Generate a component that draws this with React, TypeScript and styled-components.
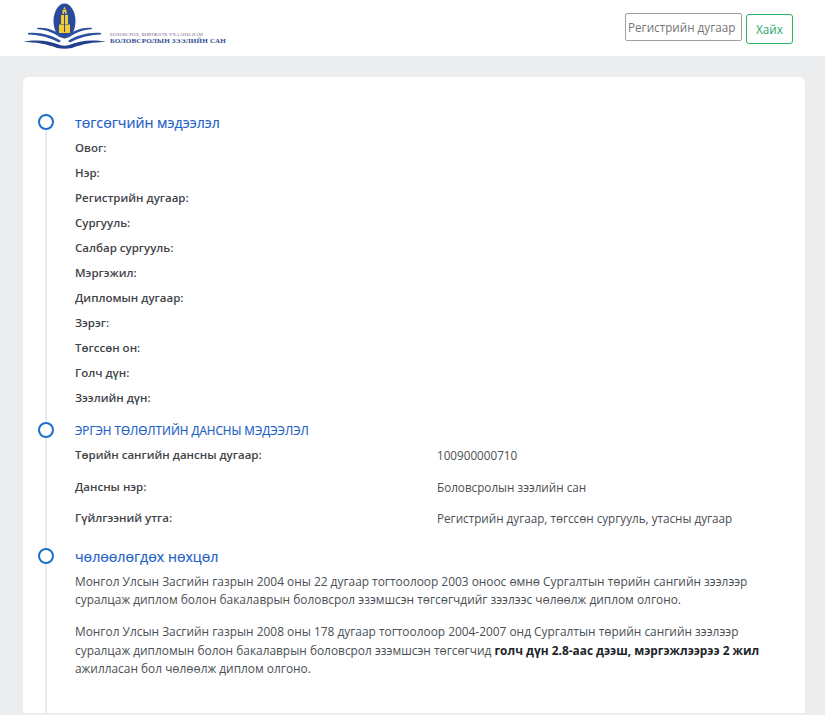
import React from 'react'
import styled, { createGlobalStyle } from 'styled-components'

const GlobalStyle = createGlobalStyle`
  html, body {
    margin: 0;
    padding: 0;
    background: #ecedef;
    font-family: "Open Sans", "Noto Sans", sans-serif;
    color: #343a40;
  }
  * { box-sizing: border-box; }
`

const Header = styled.header`
  height: 56px;
  background: #fff;
  display: flex;
  align-items: flex-start;
  justify-content: space-between;
  padding: 0 32px 0 23px;
`

const Brand = styled.div`
  display: flex;
  align-items: flex-start;
  gap: 3px;
`

const BrandText = styled.div`
  padding-top: 32px;
  font-family: "Liberation Serif", serif;
  white-space: nowrap;
`

const Ministry = styled.div`
  font-size: 4.6px;
  line-height: 5px;
  color: #77668c;
  letter-spacing: 0.2px;
`

const FundName = styled.div`
  font-size: 7.1px;
  line-height: 9px;
  font-weight: 700;
  color: #2f4a8f;
  letter-spacing: 0.2px;
`

const SearchForm = styled.form`
  display: flex;
  align-items: flex-start;
  gap: 4px;
  padding-top: 13px;
`

const SearchInput = styled.input`
  width: 117px;
  height: 28px;
  padding: 0 2px;
  border: 1px solid #a0a0a0;
  border-radius: 2px;
  font-family: inherit;
  font-size: 11.7px;
  outline: none;
  &::placeholder { color: #757575; opacity: 1; }
`

const SearchButton = styled.button`
  width: 47px;
  height: 30px;
  margin-top: 1px;
  border: 1px solid #28b463;
  border-radius: 3px;
  background: #fff;
  color: #28a868;
  font-family: inherit;
  font-size: 11.7px;
`

const Main = styled.main`
  padding: 21px 20px 0 23px;
`

const Card = styled.div`
  background: #fff;
  border-radius: 6px 6px 0 0;
  height: 636px;
  padding: 36px 0 0 15px;
  overflow: hidden;
`

const Timeline = styled.div`
  display: flex;
  flex-direction: column;
`

const Section = styled.section<{ $gap: number }>`
  position: relative;
  padding: 0 25px 0 37px;
  margin-bottom: ${(p) => p.$gap}px;

  &::before {
    content: '';
    position: absolute;
    left: 7px;
    top: 0;
    bottom: ${(p) => -p.$gap}px;
    width: 2px;
    background: #e9ecef;
  }
`

const Marker = styled.span`
  position: absolute;
  left: 0;
  top: 1px;
  width: 16px;
  height: 16px;
  border: 2px solid #1f6fc9;
  border-radius: 50%;
  background: #fff;
`

const Title = styled.h3<{ $size: number }>`
  margin: 0;
  font-size: ${(p) => p.$size}px;
  line-height: 19px;
  font-weight: 400;
  color: #1f62c6;
  -webkit-text-stroke: 0.2px #1f62c6;
`

const InfoList = styled.div<{ $top: number }>`
  margin-top: ${(p) => p.$top}px;
`

const InfoLine = styled.div`
  height: 25px;
  font-size: 11.5px;
  line-height: 25px;
  font-weight: 600;
  color: #3f4449;
`

const AccountRow = styled.div`
  display: grid;
  grid-template-columns: 362px 1fr;
  height: 31.5px;
  font-size: 11.7px;
  line-height: 25px;
`

const AccountLabel = styled.div`
  font-size: 11.5px;
  line-height: 24px;
  font-weight: 600;
  color: #3f4449;
`

const AccountValue = styled.div`
  color: #4a4f55;
`

const Paragraph = styled.p`
  margin: 0 0 13px;
  font-size: 11.9px;
  line-height: 18.7px;
  color: #4a4f55;

  b { color: #212529; }
`

function LogoMark() {
  return (
    <svg width="84" height="47" viewBox="0 0 84 47" style={{ marginTop: 2 }}>
      <ellipse cx="41.5" cy="19" rx="11" ry="17.5" fill="#2a4b9b" />
      {/* соёмбо */}
      <path d="M41.5 4.500l1.300 3h-2.600z" fill="#f5cc2f" />
      <path d="M39.500 8h4v4h-4z" fill="#f5cc2f" />
      <path d="M38 13h7v9h-7z" fill="#f5cc2f" />
      <path d="M36 22.500h11v8.500h-11z" fill="#f5cc2f" />
      <path d="M41 10h1v20h-1z" fill="#2a4b9b" />
      {/* ном */}
      <path d="M14 26c9-1 18 2 25 8l-2 1.500c-6-5-14-7.500-23-8.500z" fill="#2d4f9f" />
      <path d="M69 26c-9-1-18 2-25 8l2 1.500c6-5 14-7.500 23-8.500z" fill="#2d4f9f" />
      <path d="M5 31c12-1 24 2 33 8l-2 1.500c-9-5-19-7.500-31-8z" fill="#2d4f9f" />
      <path d="M78 31c-12-1-24 2-33 8l2 1.500c9-5 19-7.500 31-8z" fill="#2d4f9f" />
      <path d="M0 40c14-3 27-1 37 3 3 1 6 1 9 0 10-4 23-6 37-3-12 0-24 2-34 6-5 1-10 1-15 0-10-4-22-6-34-6z" fill="#24408c" />
    </svg>
  )
}

export default function App() {
  return (
    <>
      <GlobalStyle />
      <Header>
        <Brand>
          <LogoMark />
          <BrandText>
            <Ministry>БОЛОВСРОЛ, ШИНЖЛЭХ УХААНЫ ЯАМ</Ministry>
            <FundName>БОЛОВСРОЛЫН ЗЭЭЛИЙН САН</FundName>
          </BrandText>
        </Brand>
        <SearchForm>
          <SearchInput placeholder="Регистрийн дугаар" />
          <SearchButton type="button">Хайх</SearchButton>
        </SearchForm>
      </Header>
      <Main>
        <Card>
          <Timeline>
            <Section $gap={11}>
              <Marker />
              <Title $size={14.2}>төгсөгчийн мэдээлэл</Title>
              <InfoList $top={3}>
                <InfoLine>Овог:</InfoLine>
                <InfoLine>Нэр:</InfoLine>
                <InfoLine>Регистрийн дугаар:</InfoLine>
                <InfoLine>Сургууль:</InfoLine>
                <InfoLine>Салбар сургууль:</InfoLine>
                <InfoLine>Мэргэжил:</InfoLine>
                <InfoLine>Дипломын дугаар:</InfoLine>
                <InfoLine>Зэрэг:</InfoLine>
                <InfoLine>Төгссөн он:</InfoLine>
                <InfoLine>Голч дүн:</InfoLine>
                <InfoLine>Зээлийн дүн:</InfoLine>
              </InfoList>
            </Section>
            <Section $gap={9}>
              <Marker />
              <Title $size={11.7}>ЭРГЭН ТӨЛӨЛТИЙН ДАНСНЫ МЭДЭЭЛЭЛ</Title>
              <InfoList $top={3}>
                <AccountRow>
                  <AccountLabel>Төрийн сангийн дансны дугаар:</AccountLabel>
                  <AccountValue>100900000710</AccountValue>
                </AccountRow>
                <AccountRow>
                  <AccountLabel>Дансны нэр:</AccountLabel>
                  <AccountValue>Боловсролын зээлийн сан</AccountValue>
                </AccountRow>
                <AccountRow>
                  <AccountLabel>Гүйлгээний утга:</AccountLabel>
                  <AccountValue>Регистрийн дугаар, төгссөн сургууль, утасны дугаар</AccountValue>
                </AccountRow>
              </InfoList>
            </Section>
            <Section $gap={60}>
              <Marker />
              <Title $size={14.2}>чөлөөлөгдөх нөхцөл</Title>
              <InfoList $top={6}>
                <Paragraph>
                  Монгол Улсын Засгийн газрын 2004 оны 22 дугаар тогтоолоор 2003 оноос өмнө Сургалтын төрийн сангийн зээлээр суралцаж диплом болон бакалаврын боловсрол эзэмшсэн төгсөгчдийг зээлээс чөлөөлж диплом олгоно.
                </Paragraph>
                <Paragraph>
                  Монгол Улсын Засгийн газрын 2008 оны 178 дугаар тогтоолоор 2004-2007 онд Сургалтын төрийн сангийн зээлээр суралцаж дипломын болон бакалаврын боловсрол эзэмшсэн төгсөгчид <b>голч дүн 2.8-аас дээш, мэргэжлээрээ 2 жил</b> ажилласан бол чөлөөлж диплом олгоно.
                </Paragraph>
              </InfoList>
            </Section>
          </Timeline>
        </Card>
      </Main>
    </>
  )
}
